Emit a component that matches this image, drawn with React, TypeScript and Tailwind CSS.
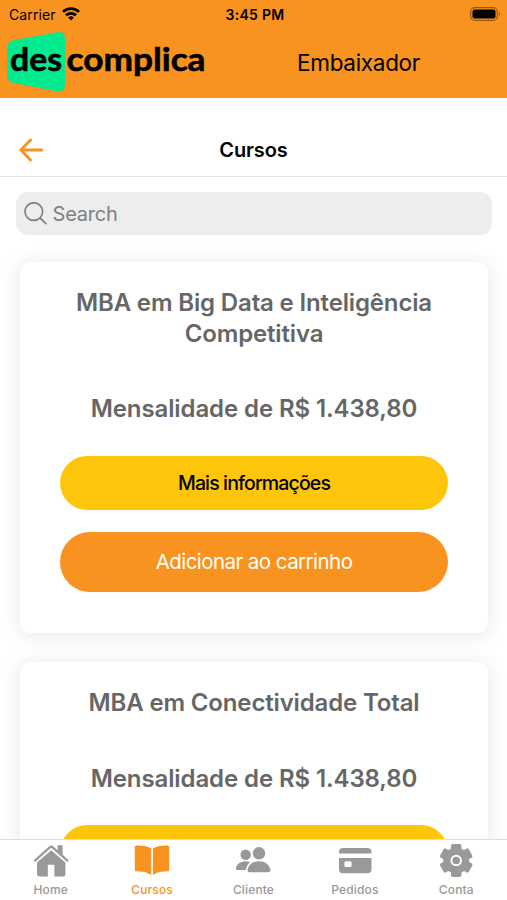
import React from "react";

interface Course {
  title: string;
  price: string;
}

interface TabItem {
  label: string;
  icon: React.ElementType;
  active?: boolean;
}

const courses: Course[] = [
  { title: "MBA em Big Data e Inteligência Competitiva", price: "1.438,80" },
  { title: "MBA em Conectividade Total", price: "1.438,80" },
];

const HomeIcon = () => (
  <svg width="36" height="36" viewBox="0 0 36 36" fill="currentColor">
    <path d="M18.2 7.2 32.4 19.6V31a2.5 2.5 0 0 1-2.5 2.5H21.4V21.8h-6.6v11.7H6.5A2.5 2.5 0 0 1 4 31V19.6Z" />
    <path d="M2 17.6 17 4.2q1.2-1 2.4 0l15 13.4" fill="none" stroke="#fff" strokeWidth="4.4" />
    <path d="M2 17.6 17 4.2q1.2-1 2.4 0l15 13.4" fill="none" stroke="currentColor" strokeWidth="2.3" strokeLinecap="round" />
    <path d="M24.6 2.2h5v11l-5-4.4Z" />
  </svg>
);

const BookIcon = () => (
  <svg width="36" height="36" viewBox="0 0 36 36" fill="currentColor">
    <path d="M17.2 5.6C14 3 8 2.3 2.2 2.6Q.8 2.8.8 4.1v22.8q0 1.4 1.5 1.4c6 0 11 .8 14.9 3.7Z" />
    <path d="M18.9 5.6C22.1 3 28.1 2.3 33.8 2.6q1.4.2 1.4 1.5v22.8q0 1.4-1.5 1.4c-6 0-10.9.8-14.8 3.7Z" />
  </svg>
);

const PeopleIcon = () => (
  <svg width="36" height="36" viewBox="0 0 36 36" fill="currentColor">
    <circle cx="10.7" cy="11.7" r="5.2" />
    <path d="M15.2 19c-2-.7-4-.8-5.3-.7C5.2 18.5 1.3 21.4.9 25.7q0 1.4 1.3 1.4h8.6C11.6 23.3 13 21 15.2 19Z" />
    <circle cx="24" cy="10.3" r="6.2" />
    <path d="M24 18.2c5.6 0 10.7 3.3 11.4 8.9q.1 2.2-1.9 2.2H14.5q-2 0-1.9-2.2c.7-5.6 5.8-8.9 11.4-8.9Z" />
  </svg>
);

const CardIcon = () => (
  <svg width="36" height="36" viewBox="0 0 36 36" fill="currentColor">
    <path d="M2 10.6V9a4 4 0 0 1 4-4h24.5a4 4 0 0 1 4 4v1.6Z" />
    <path
      fillRule="evenodd"
      d="M2 15h32.5v11.2a4 4 0 0 1-4 4H6a4 4 0 0 1-4-4ZM8.9 18.2a1.5 1.5 0 0 0-1.5 1.5v2.9a1.5 1.5 0 0 0 1.5 1.5h4.2a1.5 1.5 0 0 0 1.5-1.5v-2.9a1.5 1.5 0 0 0-1.5-1.5Z"
    />
  </svg>
);

const GearIcon = () => (
  <svg width="36" height="36" viewBox="0 0 36 36">
    <g fill="currentColor">
      <circle cx="18.2" cy="17.5" r="13" />
      <rect x="13" y="1" width="10.4" height="33" rx="1.8" />
      <rect x="13" y="1" width="10.4" height="33" rx="1.8" transform="rotate(60 18.2 17.5)" />
      <rect x="13" y="1" width="10.4" height="33" rx="1.8" transform="rotate(120 18.2 17.5)" />
    </g>
    <circle cx="18.2" cy="17.5" r="4.8" fill="currentColor" stroke="#fff" strokeWidth="2" />
  </svg>
);

const tabs: TabItem[] = [
  { label: "Home", icon: HomeIcon },
  { label: "Cursos", icon: BookIcon, active: true },
  { label: "Cliente", icon: PeopleIcon },
  { label: "Pedidos", icon: CardIcon },
  { label: "Conta", icon: GearIcon },
];

const StatusBar = () => (
  <div className="flex h-7 items-center justify-between pl-[9px] pr-[6px] text-[14px]">
    <div className="flex flex-1 items-center gap-[6px]">
      <span className="tracking-[0.1px]">Carrier</span>
      <svg width="18" height="14" viewBox="0 0 18 14" fill="none" stroke="#000" strokeWidth="2.7">
        <path d="M1 4.9a11.5 11.5 0 0 1 16 0" />
        <path d="M4 8.3a7.2 7.2 0 0 1 10 0" />
        <path d="M9 13.5 6.2 10.7a4 4 0 0 1 5.6 0Z" fill="#000" stroke="none" />
      </svg>
    </div>
    <span className="font-semibold tracking-[0.3px]">3:45 PM</span>
    <div className="flex flex-1 justify-end">
      <svg width="31" height="14" viewBox="0 0 31 14">
        <rect x=".7" y=".7" width="26.6" height="12.6" rx="3.8" fill="none" stroke="#000" strokeOpacity=".4" strokeWidth="1.2" />
        <rect x="2.5" y="2.5" width="23" height="9" rx="2" />
        <path d="M28.8 4.8q2 2.2 0 4.4Z" fillOpacity=".4" />
      </svg>
    </div>
  </div>
);

const Logo = () => (
  <svg width="210" height="66" viewBox="0 0 210 66" className="shrink-0">
    <path
      d="M13 12.5 57 4.2q8-1.2 8 6v46q0 8-8 7L14 55q-7-1.2-7-8V20q0-6.500 6-7.500Z"
      fill="#00eb8e"
    />
    <g fontFamily="Lato, sans-serif" fontWeight="700" fontSize="33" stroke="#000" strokeWidth=".6" strokeLinejoin="round">
      <text x="10" y="43" textLength="52" lengthAdjust="spacingAndGlyphs">des</text>
      <text x="66.5" y="43" textLength="139" lengthAdjust="spacingAndGlyphs">complica</text>
    </g>
  </svg>
);

const CourseCard = ({ title, price }: Course) => (
  <div className="rounded-[10px] bg-white px-10 pb-[41px] pt-[26px] shadow-[0_2px_20px_rgba(0,0,0,0.1)]">
    <div className="text-center text-[24px] font-semibold leading-[30.5px] text-[#666]">
      <h2 className="-mx-2 tracking-[-0.15px]">{title}</h2>
      <p className="mt-[45px] tracking-[-0.1px]">Mensalidade de R$ {price}</p>
    </div>
    <button className="mt-[31px] block h-[54px] w-full rounded-full bg-[#fec60b] pt-[2px] text-[19.5px] font-medium tracking-[-0.87px]">
      Mais informações
    </button>
    <button className="mt-[22px] block h-[60px] w-full rounded-full bg-[#f7931e] pt-[2px] text-[20.5px] tracking-[-0.55px] text-white">
      Adicionar ao carrinho
    </button>
  </div>
);

const App = () => {
  return (
    <div className="flex h-[900px] w-[507px] flex-col overflow-hidden bg-white font-['Inter',sans-serif] text-black">
      <header className="h-[98px] shrink-0 bg-[#f7931e]">
        <StatusBar />
        <div className="flex">
          <Logo />
          <span className="ml-[87px] mt-[18px] text-[22.5px] leading-[34px] tracking-[-0.3px]">Embaixador</span>
        </div>
      </header>

      <div className="grid h-[79px] shrink-0 grid-cols-3 items-center border-b border-[#e4e4e4] px-[19px] pt-[25px]">
        <svg width="25" height="24" viewBox="0 0 25 24" fill="none" stroke="#f7931e" strokeWidth="2.9" strokeLinecap="round" strokeLinejoin="round">
          <path d="M11.5 2 1.8 12l9.7 10M2 12h20.8" />
        </svg>
        <h1 className="pt-px text-center text-[20px] font-semibold tracking-[-0.1px]">Cursos</h1>
      </div>

      <main className="min-h-0 flex-1 overflow-hidden">
        <div className="ml-4 mr-[15px] mt-[15px] flex h-[43px] items-center gap-[6px] rounded-[12px] bg-[#ededed] pl-[7.5px] text-[#808080]">
          <svg width="23" height="23" viewBox="0 0 23 23" fill="none" stroke="currentColor" strokeWidth="1.7" strokeLinecap="round">
            <circle cx="9.8" cy="9.6" r="8.8" />
            <path d="m16.2 16.1 5.7 5.6" />
          </svg>
          <span className="text-[20px] tracking-[-0.2px]">Search</span>
        </div>
        <div className="ml-5 mr-[19px] mt-[27px] flex flex-col gap-[29.5px]">
          {courses.map((course) => (
            <CourseCard key={course.title} {...course} />
          ))}
        </div>
      </main>

      <nav className="relative grid h-[61px] shrink-0 grid-cols-5 border-t border-[#dedede] bg-white pt-[3px]">
        {tabs.map(({ label, icon: Icon, active }) => (
          <div
            key={label}
            className={`flex flex-col items-center ${active ? "text-[#f7931e]" : "text-[#999]"}`}
          >
            <Icon />
            <span className="mt-[3px] text-[12px] font-medium leading-4 tracking-[0.15px]">{label}</span>
          </div>
        ))}
      </nav>
    </div>
  );
};

export default App;
